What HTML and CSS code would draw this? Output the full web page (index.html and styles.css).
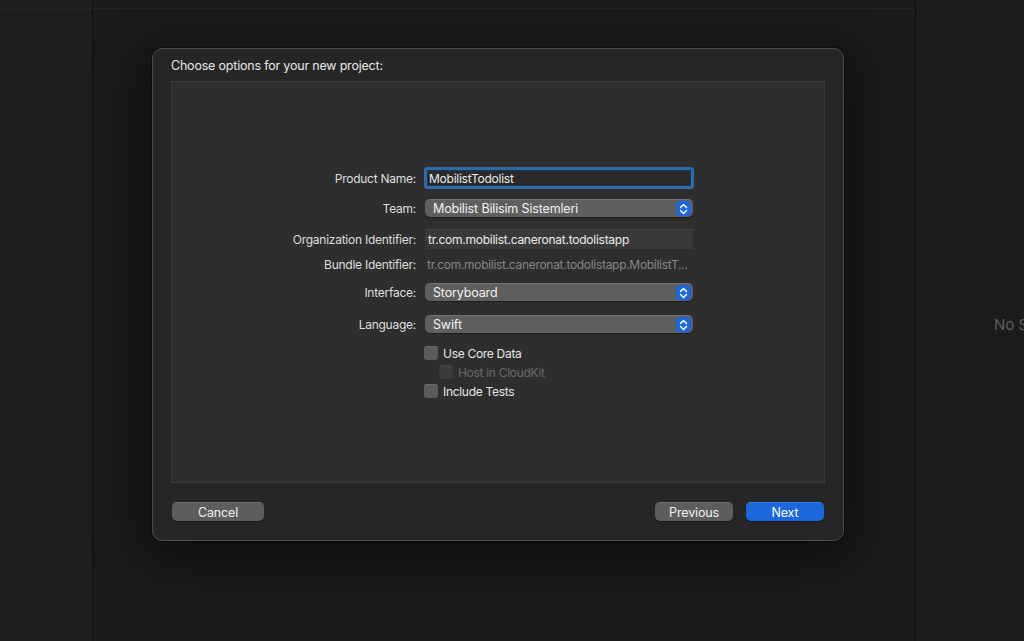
FILE: index.html
```html
<!DOCTYPE html>
<html>
<head>
<meta charset="utf-8">
<link rel="stylesheet" href="styles.css">
</head>
<body>
<div class="app">
  <div class="sidebar"><div class="topstrip"></div></div>
  <div class="main"><div class="topstrip"></div></div>
  <div class="inspector">
    <div class="topstrip-plain"></div>
    <div class="noselect">No Selection</div>
  </div>
</div>

<div class="sheet">
  <div class="sheet-title">Choose options for your new project:</div>
  <div class="panel">
    <div class="form">
      <div class="row r1">
        <div class="label">Product Name:</div>
        <div class="field focus">MobilistTodolist</div>
      </div>
      <div class="row r2">
        <div class="label">Team:</div>
        <div class="popup"><span>Mobilist Bilisim Sistemleri</span>
          <span class="stepper"><svg width="9" height="12" viewBox="0 0 9 12"><path d="M1.5 4.5 L4.5 1.5 L7.5 4.5 M1.5 7.5 L4.5 10.5 L7.5 7.5" fill="none" stroke="#fff" stroke-width="1.5" stroke-linecap="round" stroke-linejoin="round"/></svg></span>
        </div>
      </div>
      <div class="row r3">
        <div class="label">Organization Identifier:</div>
        <div class="field plain">tr.com.mobilist.caneronat.todolistapp</div>
      </div>
      <div class="row r4">
        <div class="label">Bundle Identifier:</div>
        <div class="value dim">tr.com.mobilist.caneronat.todolistapp.MobilistT...</div>
      </div>
      <div class="row r5">
        <div class="label">Interface:</div>
        <div class="popup"><span>Storyboard</span>
          <span class="stepper"><svg width="9" height="12" viewBox="0 0 9 12"><path d="M1.5 4.5 L4.5 1.5 L7.5 4.5 M1.5 7.5 L4.5 10.5 L7.5 7.5" fill="none" stroke="#fff" stroke-width="1.5" stroke-linecap="round" stroke-linejoin="round"/></svg></span>
        </div>
      </div>
      <div class="row r6">
        <div class="label">Language:</div>
        <div class="popup"><span>Swift</span>
          <span class="stepper"><svg width="9" height="12" viewBox="0 0 9 12"><path d="M1.5 4.5 L4.5 1.5 L7.5 4.5 M1.5 7.5 L4.5 10.5 L7.5 7.5" fill="none" stroke="#fff" stroke-width="1.5" stroke-linecap="round" stroke-linejoin="round"/></svg></span>
        </div>
      </div>
      <div class="row r7">
        <div class="label"></div>
        <div class="check"><span class="box"></span><span>Use Core Data</span></div>
      </div>
      <div class="row r8">
        <div class="label"></div>
        <div class="check indent disabled"><span class="box"></span><span>Host in CloudKit</span></div>
      </div>
      <div class="row r9">
        <div class="label"></div>
        <div class="check"><span class="box"></span><span>Include Tests</span></div>
      </div>
    </div>
  </div>
  <div class="buttons">
    <button class="btn cancel">Cancel</button>
    <div class="spacer"></div>
    <button class="btn prev">Previous</button>
    <button class="btn next">Next</button>
  </div>
</div>
</body>
</html>
```

FILE: styles.css
```css
* { box-sizing: border-box; }
html, body {
  margin: 0;
  padding: 0;
  width: 1024px;
  height: 641px;
  overflow: hidden;
  background: #1b1b1b;
  font-family: Inter, "Liberation Sans", sans-serif;
}
.app {
  display: grid;
  grid-template-columns: 92px 1px 821px 1px 1fr;
  height: 641px;
}
.sidebar {
  grid-column: 1;
  background: #1f1f1f;
}
.main {
  grid-column: 3;
  background: #1b1b1b;
  border-left: 1px solid #0e0e0e;
  margin-left: -1px;
  width: 823px;
}
.inspector {
  grid-column: 5;
  background: #1c1c1c;
  border-left: 1px solid #0e0e0e;
  overflow: hidden;
}
.topstrip {
  height: 9px;
  border-bottom: 1px solid #252525;
}
.topstrip-plain { height: 9px; }
.noselect {
  margin-top: 306px;
  padding-left: 78px;
  white-space: nowrap;
  overflow: hidden;
  color: #5c5c5c;
  font-size: 15px;
  line-height: 20px;
}

.sheet {
  position: absolute;
  left: 152px;
  top: 48px;
  width: 692px;
  height: 493px;
  background: #262626;
  border: 1px solid #4c4c4c;
  border-radius: 10px;
  box-shadow: 0 0 0 1px #0c0c0c, 0 10px 50px 10px rgba(0,0,0,0.45);
  padding: 0 18px 0 18px;
  display: flex;
  flex-direction: column;
}
.sheet-title {
  color: #e6e6e6;
  font-size: 12.5px;
  letter-spacing: -0.2px;
  line-height: 16px;
  padding-top: 9px;
  height: 32px;
}
.panel {
  height: 402px;
  background: #2e2e2e;
  border: 1px solid #3c3c3c;
}
.form {
  padding-top: 85px;
}
.row {
  display: flex;
  align-items: center;
}
.label {
  width: 253px;
  flex: none;
  text-align: right;
  padding-right: 9px;
  color: #dedede;
  font-size: 12px;
  letter-spacing: -0.25px;
}
.r1 { height: 22px; }
.r2 { height: 18px; margin-top: 10px; }
.r3 { height: 20px; margin-top: 12px; }
.r4 { height: 16px; margin-top: 7px; }
.r5 { height: 18px; margin-top: 11px; }
.r6 { height: 18px; margin-top: 14px; }
.r7 { height: 14px; margin-top: 13px; }
.r8 { height: 14px; margin-top: 5px; }
.r9 { height: 14px; margin-top: 5px; }

.field {
  width: 268px;
  height: 100%;
  font-size: 12px;
  letter-spacing: -0.25px;
  color: #ececec;
  display: flex;
  align-items: center;
}
.field.focus {
  width: 270px;
  margin-left: -1px;
  background: #2a2a2a;
  border: 3px solid #2e6aa8;
  border-radius: 3px;
  padding-left: 2px;
  box-shadow: inset 0 0 0 1px #1e3550;
}
.field.plain {
  background: #393939;
  padding-left: 3px;
  border-top: 1px solid #454545;
}
.value {
  font-size: 12px;
  letter-spacing: -0.3px;
  padding-left: 2px;
  white-space: nowrap;
}
.value.dim { color: #878787; }

.popup {
  width: 268px;
  height: 100%;
  background: #5f5f5f;
  border-top: 1px solid #727272;
  border-radius: 5px;
  box-shadow: 0 1px 1px rgba(0,0,0,0.35);
  display: flex;
  align-items: center;
  justify-content: space-between;
  padding: 0 2px 0 8px;
  color: #f2f2f2;
  font-size: 12.5px;
  letter-spacing: -0.15px;
}
.stepper {
  width: 15px;
  height: 15px;
  background: #1d66dc;
  border-radius: 4px;
  display: flex;
  align-items: center;
  justify-content: center;
}

.check {
  display: flex;
  align-items: center;
  font-size: 12px;
  letter-spacing: -0.3px;
  color: #e6e6e6;
}
.check .box {
  width: 14px;
  height: 14px;
  border-radius: 3px;
  background: #5b5b5b;
  border-top: 1px solid #6c6c6c;
  margin-right: 5px;
  margin-left: -1px;
}
.check.indent { margin-left: 15px; }
.check.disabled { color: #6a6a6a; }
.check.disabled .box {
  background: #3b3b3b;
  border-top: 1px solid #444;
}

.buttons {
  display: flex;
  align-items: center;
  margin-top: 19px;
  padding-left: 1px;
  padding-right: 1px;
}
.spacer { flex: 1; }
.btn {
  height: 19px;
  border: none;
  border-radius: 5px;
  font-family: Inter, "Liberation Sans", sans-serif;
  font-size: 12.5px;
  letter-spacing: -0.15px;
  color: #f0f0f0;
  padding: 0;
  background: #5d5d5d;
  border-top: 1px solid #6d6d6d;
  box-shadow: 0 1px 1px rgba(0,0,0,0.35);
}
.cancel { width: 92px; }
.prev { width: 78px; margin-right: 13px; }
.next { width: 78px; background: #1b68dd; border-top: 1px solid #3580ea; color: #fff; }
```
